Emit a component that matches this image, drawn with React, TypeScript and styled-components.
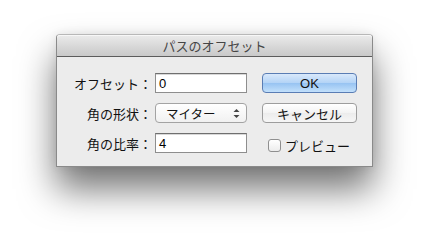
import React from "react";
import styled, { createGlobalStyle } from "styled-components";

const GlobalStyle = createGlobalStyle`
  html, body {
    margin: 0;
    padding: 0;
    background: #ffffff;
  }
  body {
    font-family: "Noto Sans CJK JP", "Liberation Sans", sans-serif;
  }
`;

const Page = styled.div`
  width: 429px;
  height: 246px;
  padding: 34px 0 0 56px;
  box-sizing: border-box;
  overflow: hidden;
`;

const Window = styled.div`
  width: 317px;
  height: 133px;
  box-sizing: border-box;
  background: #ececec;
  border: 1px solid #8a8a8a;
  border-top-color: #b8b8b8;
  border-radius: 4px 4px 0 0;
  box-shadow: 0 22px 36px rgba(0, 0, 0, 0.55), 0 0 10px rgba(0, 0, 0, 0.08);
  display: flex;
  flex-direction: column;
`;

const TitleBar = styled.div`
  height: 21px;
  flex: none;
  border-bottom: 1px solid #5c5c5c;
  border-radius: 3px 3px 0 0;
  background: linear-gradient(#ebebeb, #d6d6d6 60%, #c9c9c9);
  box-shadow: inset 0 1px 0 #f7f7f7;
  display: flex;
  align-items: center;
  justify-content: center;
  font-size: 13px;
  color: #454545;
`;

const Body = styled.div`
  display: grid;
  grid-template-columns: 82px 92px 110px;
  grid-auto-rows: 20px;
  row-gap: 10px;
  padding: 16px 15px 0 16px;
`;

const Label = styled.label`
  display: flex;
  align-items: center;
  justify-content: flex-end;
  padding-right: 3px;
  font-size: 13px;
  color: #111;
  white-space: nowrap;
`;

const Field = styled.div`
  box-sizing: border-box;
  height: 20px;
  background: #fff;
  border: 1px solid #8e8e8e;
  border-top-color: #6f6f6f;
  box-shadow: inset 0 1px 0 #d8d8d8;
  display: flex;
  align-items: center;
  padding-left: 3px;
  font-family: "Liberation Sans", sans-serif;
  font-size: 13px;
  color: #000;
`;

const Select = styled.div`
  box-sizing: border-box;
  height: 20px;
  border: 1px solid #a3a3a3;
  border-radius: 4px;
  background: linear-gradient(#ffffff, #f1f1f1);
  display: flex;
  align-items: center;
  justify-content: space-between;
  padding: 0 6px 0 10px;
  font-size: 12.5px;
  color: #111;
`;

const Stepper = styled.svg`
  width: 7px;
  height: 11px;
`;

const Button = styled.div<{ $primary?: boolean }>`
  box-sizing: border-box;
  height: 20px;
  margin-left: 15px;
  border-radius: 4px;
  border: 1px solid ${(p) => (p.$primary ? "#5a7db4" : "#9d9d9d")};
  background: ${(p) =>
    p.$primary
      ? "linear-gradient(#d9e9fb, #b3d3f6 50%, #97c3f2 51%, #c2e0fb)"
      : "linear-gradient(#ffffff, #f3f3f3 50%, #ececec 51%, #f6f6f6)"};
  display: flex;
  align-items: center;
  justify-content: center;
  font-size: 13px;
  color: #111;
  font-family: ${(p) =>
    p.$primary ? '"Liberation Sans", sans-serif' : '"Noto Sans CJK JP", sans-serif'};
`;

const CheckRow = styled.label`
  margin-left: 21px;
  display: flex;
  align-items: center;
  gap: 4px;
  font-size: 13px;
  color: #111;
  white-space: nowrap;
  padding-top: 5px;
`;

const Box = styled.span`
  flex: none;
  width: 13px;
  height: 13px;
  box-sizing: border-box;
  border: 1px solid #8f8f8f;
  border-radius: 3px;
  background: linear-gradient(#ffffff, #ececec);
`;

export default function App() {
  return (
    <>
      <GlobalStyle />
      <Page>
        <Window>
          <TitleBar>パスのオフセット</TitleBar>
          <Body>
            <Label>オフセット：</Label>
            <Field>0</Field>
            <Button $primary>OK</Button>

            <Label>角の形状：</Label>
            <Select>
              <span>マイター</span>
              <Stepper viewBox="0 0 7 11">
                <path d="M0.5 4 L3.5 1 L6.5 4 Z" fill="#444" />
                <path d="M0.5 7 L3.5 10 L6.5 7 Z" fill="#444" />
              </Stepper>
            </Select>
            <Button>キャンセル</Button>

            <Label>角の比率：</Label>
            <Field>4</Field>
            <CheckRow>
              <Box />
              プレビュー
            </CheckRow>
          </Body>
        </Window>
      </Page>
    </>
  );
}
